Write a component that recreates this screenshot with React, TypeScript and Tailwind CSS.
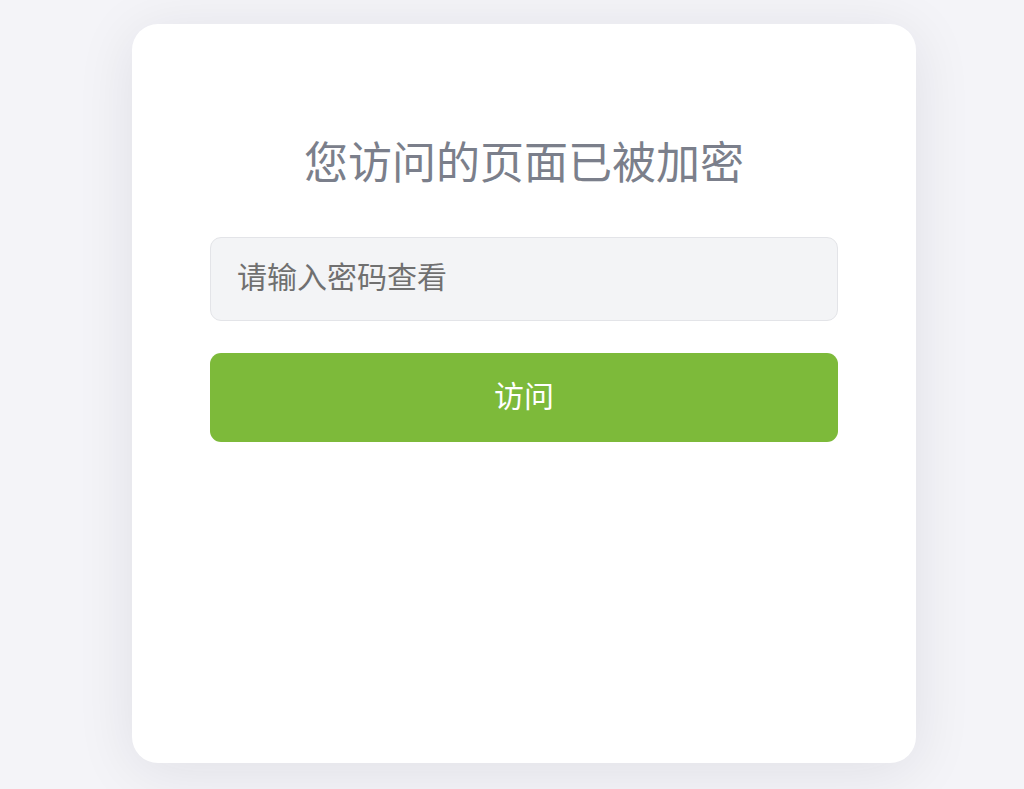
export default function App() {
  return (
    <div
      className="min-h-[789px] w-full bg-[#f4f4f8] pt-[24px] pl-[132px]"
      style={{ fontFamily: '"Noto Sans CJK SC", "Noto Sans", sans-serif' }}
    >
      <div className="flex h-[739px] w-[784px] flex-col rounded-[26px] bg-white px-[78px] pt-[109px] shadow-[0_8px_60px_rgba(20,20,40,0.09)]">
        <h1 className="text-center text-[44px] leading-[54px] font-normal text-[#7b7f8b]">
          您访问的页面已被加密
        </h1>
        <input
          type="password"
          placeholder="请输入密码查看"
          className="mt-[50px] h-[84px] w-full rounded-[11px] border border-[#e3e4e8] bg-[#f3f4f6] px-[26px] pb-[8px] text-[30px] text-[#555] outline-none placeholder:text-[#707070]"
        />
        <button className="mt-[32px] h-[89px] w-full rounded-[11px] bg-[#7dba3a] pb-[6px] text-[30px] text-white">
          访问
        </button>
      </div>
    </div>
  );
}
